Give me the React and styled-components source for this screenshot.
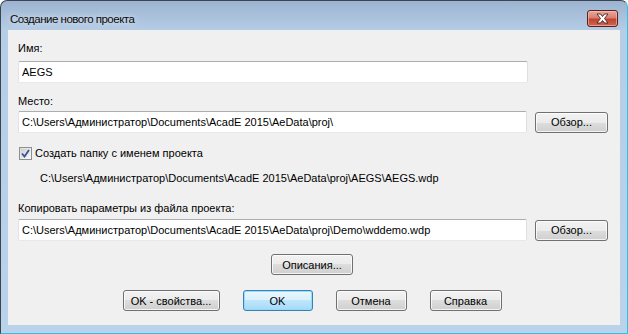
import styled, { createGlobalStyle } from 'styled-components';

const GlobalStyle = createGlobalStyle`
  html, body {
    margin: 0;
    padding: 0;
    background: #ffffff;
  }
  * {
    box-sizing: border-box;
  }
`;

const Window = styled.div`
  width: 628px;
  height: 334px;
  display: flex;
  flex-direction: column;
  padding: 0 7px 8px 7px;
  border: 1px solid;
  border-color: #3b4450 #28c4e6 #28c4e6 #3b4450;
  border-radius: 7px 7px 0 0;
  background: linear-gradient(to bottom, #9cb4d0 0px, #b6cde6 30px, #bad2ea 100%);
  font-family: 'Liberation Sans', Arial, sans-serif;
  font-size: 11px;
  color: #000;
`;

const TitleBar = styled.div`
  height: 29px;
  display: flex;
  justify-content: space-between;
  align-items: flex-start;
`;

const Title = styled.div`
  margin: 10px 0 0 2px;
  font-family: 'Liberation Sans', Arial, sans-serif;
  font-size: 11.5px;
  letter-spacing: -0.5px;
  line-height: 16px;
  color: #0a0a0a;
  text-shadow: 0 0 6px rgba(255, 255, 255, 0.9);
`;

const CloseButton = styled.div`
  margin: 9px 2px 0 0;
  width: 31px;
  height: 17px;
  border: 1px solid #5b1f22;
  border-radius: 3px;
  background: linear-gradient(to bottom, #e9a99c 0%, #d7806f 45%, #c0432f 55%, #d0694f 100%);
  box-shadow: inset 0 0 0 1px rgba(255, 200, 190, 0.55);
  display: flex;
  align-items: center;
  justify-content: center;
`;

const Client = styled.div`
  flex: 1;
  background: #f0f0f0;
  padding: 11px 12px 0 10px;
  display: flex;
  flex-direction: column;
`;

const Label = styled.div`
  line-height: 14px;
  height: 14px;
  margin-top: ${(p) => p.$top || 0}px;
  margin-bottom: ${(p) => p.$bottom || 0}px;
  padding-left: ${(p) => p.$indent || 0}px;
  white-space: nowrap;
`;

const Row = styled.div`
  display: flex;
  align-items: center;
  gap: 8px;
`;

const TextBox = styled.div`
  width: 510px;
  height: 22px;
  background: #fff;
  border: 1px solid;
  border-color: #abadb3 #dbdfe6 #e3e9ef #e2e3ea;
  border-radius: 2px;
  padding: 0 3px;
  display: flex;
  align-items: center;
  white-space: nowrap;
  overflow: hidden;
`;

const Button = styled.div`
  width: ${(p) => p.$w || 73}px;
  height: 21px;
  border: 1px solid ${(p) => (p.$default ? '#3c7fb1' : '#707070')};
  border-radius: 3px;
  background: ${(p) =>
    p.$default
      ? 'linear-gradient(to bottom, #eaf6fd 0%, #d9f0fc 50%, #bee6fd 50%, #a7d9f5 100%)'
      : 'linear-gradient(to bottom, #f2f2f2 0%, #ebebeb 50%, #dddddd 50%, #cfcfcf 100%)'};
  box-shadow: inset 0 0 0 1px ${(p) => (p.$default ? 'rgba(140, 220, 255, 0.9)' : 'rgba(255, 255, 255, 0.75)')};
  display: flex;
  align-items: center;
  justify-content: center;
  white-space: nowrap;
  flex-shrink: 0;
`;

const CheckRow = styled.div`
  margin-top: 13px;
  height: 14px;
  display: flex;
  align-items: center;
  gap: 3px;
  padding-left: 1px;
`;

const CheckBox = styled.div`
  width: 13px;
  height: 13px;
  border: 1px solid #8e8f8f;
  background: linear-gradient(135deg, #dcdcdc 0%, #fafafa 100%);
  padding: 1px;
  display: flex;
`;

const CheckInner = styled.div`
  flex: 1;
  background: linear-gradient(135deg, #cbcfd5 0%, #f6f6f6 100%);
  display: flex;
  align-items: center;
  justify-content: center;
`;

const Centered = styled.div`
  display: flex;
  justify-content: center;
  gap: ${(p) => p.$gap || 0}px;
  margin-top: ${(p) => p.$top || 0}px;
  padding-right: 2px;
`;

export default function App() {
  return (
    <>
      <GlobalStyle />
      <Window>
        <TitleBar>
          <Title>Создание нового проекта</Title>
          <CloseButton>
            <svg width="15" height="11" viewBox="0 0 15 11">
              <path
                d="M2 1 H5.5 L7.5 3.5 L9.5 1 H13 L9.5 5.5 L13 10 H9.5 L7.5 7.5 L5.5 10 H2 L5.5 5.5 Z"
                fill="#ffffff"
                stroke="#4a1e22"
                strokeWidth="0.9"
                strokeLinejoin="round"
              />
            </svg>
          </CloseButton>
        </TitleBar>
        <Client>
          <Label $bottom={6}>Имя:</Label>
          <TextBox>AEGS</TextBox>
          <Label $top={11} $bottom={3}>Место:</Label>
          <Row>
            <TextBox>C:\Users\Администратор\Documents\AcadE 2015\AeData\proj\</TextBox>
            <Button>Обзор...</Button>
          </Row>
          <CheckRow>
            <CheckBox>
              <CheckInner>
                <svg width="9" height="9" viewBox="0 0 9 9">
                  <path d="M1 4.5 L3.5 7.5 L8 1" fill="none" stroke="#3b4f8a" strokeWidth="1.7" />
                </svg>
              </CheckInner>
            </CheckBox>
            <span>Создать папку с именем проекта</span>
          </CheckRow>
          <Label $top={11} $indent={22}>C:\Users\Администратор\Documents\AcadE 2015\AeData\proj\AEGS\AEGS.wdp</Label>
          <Label $top={16} $bottom={4}>Копировать параметры из файла проекта:</Label>
          <Row>
            <TextBox>C:\Users\Администратор\Documents\AcadE 2015\AeData\proj\Demo\wddemo.wdp</TextBox>
            <Button>Обзор...</Button>
          </Row>
          <Centered $top={13}>
            <Button $w={82}>Описания...</Button>
          </Centered>
          <Centered $top={15} $gap={23}>
            <Button $w={97}>OK - свойства...</Button>
            <Button $w={70} $default>OK</Button>
            <Button $w={71}>Отмена</Button>
            <Button $w={72}>Справка</Button>
          </Centered>
        </Client>
      </Window>
    </>
  );
}
